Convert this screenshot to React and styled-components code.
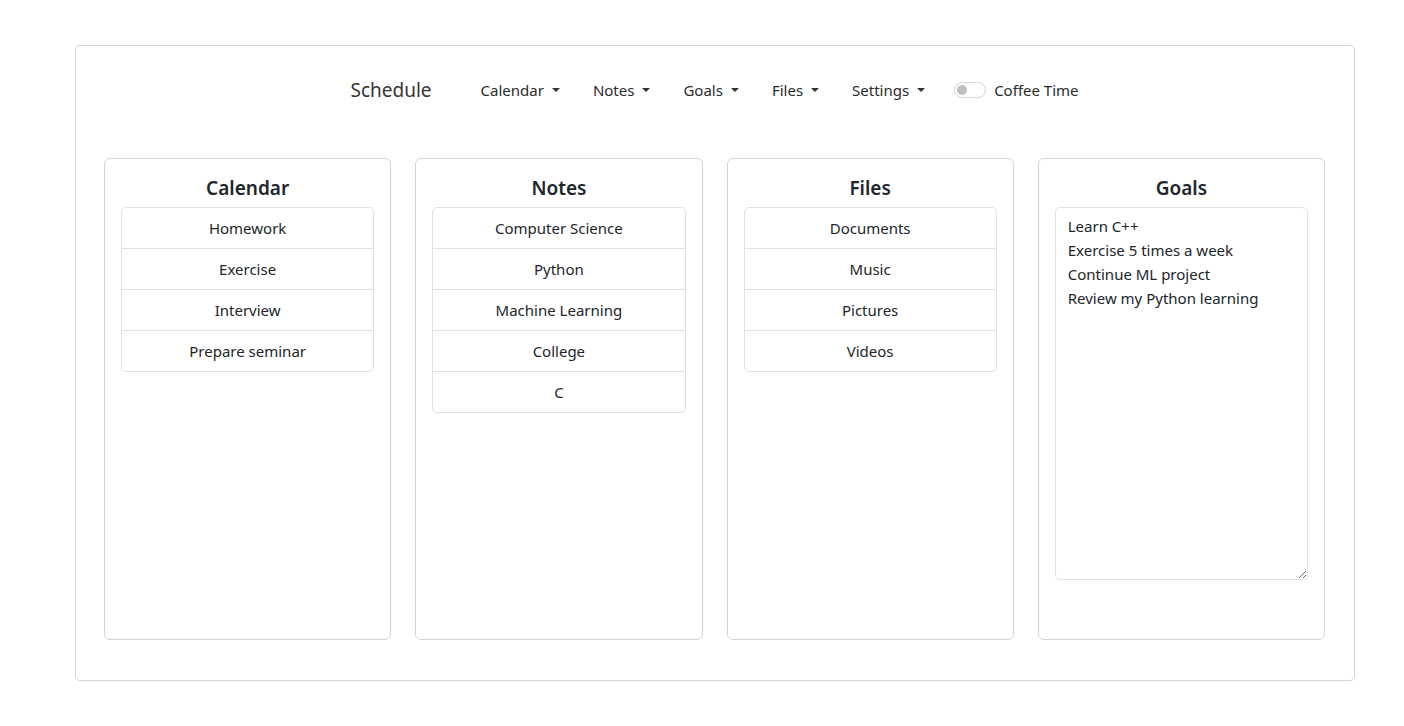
import React from "react";
import styled, { createGlobalStyle } from "styled-components";

const Global = createGlobalStyle`
  * { box-sizing: border-box; }
  body {
    margin: 0;
    font-family: "Noto Sans", "Open Sans", sans-serif;
    color: #212529;
    background: #fff;
  }
`;

const Page = styled.div`
  padding: 45px 49px 45px 75px;
`;

const Frame = styled.div`
  width: 1280px;
  height: 636px;
  border: 1px solid #d3d3d3;
  border-radius: 5px;
  padding: 24px 29px 40px 28px;
  display: flex;
  flex-direction: column;
`;

const Nav = styled.nav`
  height: 40px;
  margin-bottom: 48px;
  display: flex;
  align-items: center;
  justify-content: center;
  gap: 33px;
`;

const Brand = styled.span`
  font-size: 19px;
  color: #333;
  margin-right: 16px;
`;

const NavLink = styled.span`
  font-size: 15px;
  color: #2b2b2b;
  display: inline-flex;
  align-items: center;
  &::after {
    content: "";
    display: inline-block;
    margin-left: 8px;
    border-top: 4.5px solid #333;
    border-left: 4px solid transparent;
    border-right: 4px solid transparent;
  }
`;

const Switch = styled.label`
  display: inline-flex;
  align-items: center;
  gap: 8px;
  font-size: 15px;
  color: #2b2b2b;
  margin-left: -4px;
`;

const Track = styled.span`
  width: 32px;
  height: 16px;
  border: 1px solid #d5d5d5;
  border-radius: 8px;
  display: inline-flex;
  align-items: center;
  padding-left: 2px;
  &::before {
    content: "";
    width: 10px;
    height: 10px;
    border-radius: 50%;
    background: #bfbfbf;
  }
`;

const Grid = styled.div`
  flex: 1;
  display: grid;
  grid-template-columns: repeat(4, 1fr);
  gap: 24px;
`;

const Card = styled.section`
  border: 1px solid #d3d3d3;
  border-radius: 6px;
  padding: 17px 16px 16px;
  display: flex;
  flex-direction: column;
`;

const Title = styled.h5`
  margin: 0 0 7px;
  font-size: 19px;
  font-weight: 600;
  line-height: 24px;
  text-align: center;
  color: #212529;
`;

const List = styled.ul`
  list-style: none;
  margin: 0;
  padding: 0;
  border: 1px solid #dee2e6;
  border-radius: 5px;
`;

const Item = styled.li`
  height: 41px;
  display: flex;
  align-items: center;
  justify-content: center;
  font-size: 15px;
  color: #212529;
  border-top: 1px solid #dee2e6;
  &:first-child { border-top: none; height: 40px; }
`;

const Goals = styled.textarea`
  width: 100%;
  height: 373px;
  border: 1px solid #dee2e6;
  border-radius: 5px;
  padding: 6px 12px;
  font-family: inherit;
  font-size: 15px;
  line-height: 24px;
  color: #212529;
  resize: vertical;
  outline: none;
`;

const lists = [
  { title: "Calendar", items: ["Homework", "Exercise", "Interview", "Prepare seminar"] },
  { title: "Notes", items: ["Computer Science", "Python", "Machine Learning", "College", "C"] },
  { title: "Files", items: ["Documents", "Music", "Pictures", "Videos"] },
];

export default function App() {
  return (
    <Page>
      <Global />
      <Frame>
        <Nav>
          <Brand>Schedule</Brand>
          <NavLink>Calendar</NavLink>
          <NavLink>Notes</NavLink>
          <NavLink>Goals</NavLink>
          <NavLink>Files</NavLink>
          <NavLink>Settings</NavLink>
          <Switch>
            <Track />
            Coffee Time
          </Switch>
        </Nav>
        <Grid>
          {lists.map((l) => (
            <Card key={l.title}>
              <Title>{l.title}</Title>
              <List>
                {l.items.map((i) => (
                  <Item key={i}>{i}</Item>
                ))}
              </List>
            </Card>
          ))}
          <Card>
            <Title>Goals</Title>
            <Goals
              defaultValue={"Learn C++\nExercise 5 times a week\nContinue ML project\nReview my Python learning"}
            />
          </Card>
        </Grid>
      </Frame>
    </Page>
  );
}
